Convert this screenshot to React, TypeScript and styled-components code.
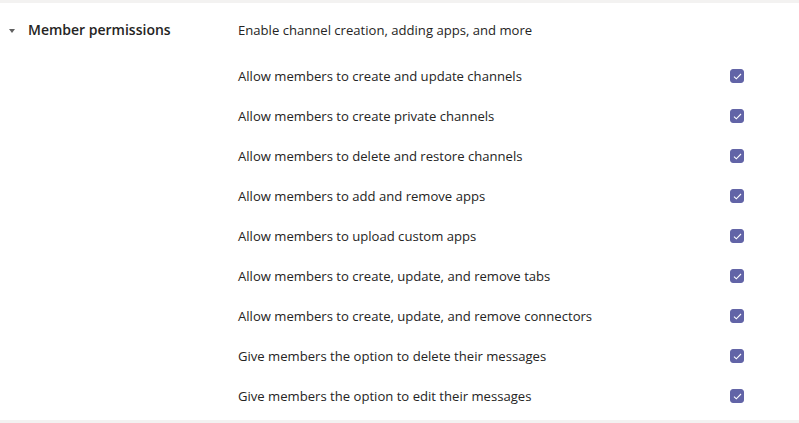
import styled, { createGlobalStyle } from 'styled-components'

const GlobalStyle = createGlobalStyle`
  html, body {
    margin: 0;
    padding: 0;
    background: #ffffff;
  }
  body {
    font-family: "Open Sans", "Noto Sans", sans-serif;
    color: #252423;
  }
`

const Page = styled.div`
  width: 799px;
  height: 423px;
  box-sizing: border-box;
  border-top: 3px solid #f3f2f1;
  border-bottom: 3px solid #f3f2f1;
  display: flex;
`

const Side = styled.div`
  width: 238px;
  flex-shrink: 0;
  display: flex;
  align-items: flex-start;
  padding: 16px 0 0 9px;
  box-sizing: border-box;
`

const Caret = styled.span`
  width: 0;
  height: 0;
  border-left: 3.5px solid transparent;
  border-right: 3.5px solid transparent;
  border-top: 4px solid #616161;
  margin: 10px 12px 0 0;
`

const Title = styled.div`
  font-size: 14px;
  font-weight: 600;
  line-height: 22px;
  color: #252423;
  margin-left: 1px;
`

const Content = styled.div`
  flex: 1;
  padding: 16px 0 0 0;
  display: flex;
  flex-direction: column;
`

const Intro = styled.div`
  font-size: 13.1px;
  line-height: 22px;
  color: #252423;
  margin-bottom: 15px;
`

const Row = styled.label`
  display: flex;
  align-items: center;
  justify-content: space-between;
  height: 40px;
  padding-right: 55px;
  font-size: 13.1px;
  color: #252423;
`

const Box = styled.span<{ $checked: boolean }>`
  width: 14px;
  height: 14px;
  border-radius: 3px;
  background: ${(p) => (p.$checked ? '#6264a7' : '#ffffff')};
  border: 1px solid ${(p) => (p.$checked ? '#6264a7' : '#605e5c')};
  box-sizing: border-box;
  display: flex;
  align-items: center;
  justify-content: center;
`

const rows = [
  'Allow members to create and update channels',
  'Allow members to create private channels',
  'Allow members to delete and restore channels',
  'Allow members to add and remove apps',
  'Allow members to upload custom apps',
  'Allow members to create, update, and remove tabs',
  'Allow members to create, update, and remove connectors',
  'Give members the option to delete their messages',
  'Give members the option to edit their messages',
]

function Check({ checked }: { checked: boolean }) {
  return (
    <Box $checked={checked}>
      {checked && (
        <svg width="9" height="7" viewBox="0 0 9 7">
          <path d="M1 3.6 L3.3 5.8 L8 1" fill="none" stroke="#fff" strokeWidth="1.1" />
        </svg>
      )}
    </Box>
  )
}

export default function App() {
  return (
    <>
      <GlobalStyle />
      <Page>
        <Side>
          <Caret />
          <Title>Member permissions</Title>
        </Side>
        <Content>
          <Intro>Enable channel creation, adding apps, and more</Intro>
          {rows.map((r) => (
            <Row key={r}>
              <span>{r}</span>
              <Check checked />
            </Row>
          ))}
        </Content>
      </Page>
    </>
  )
}
